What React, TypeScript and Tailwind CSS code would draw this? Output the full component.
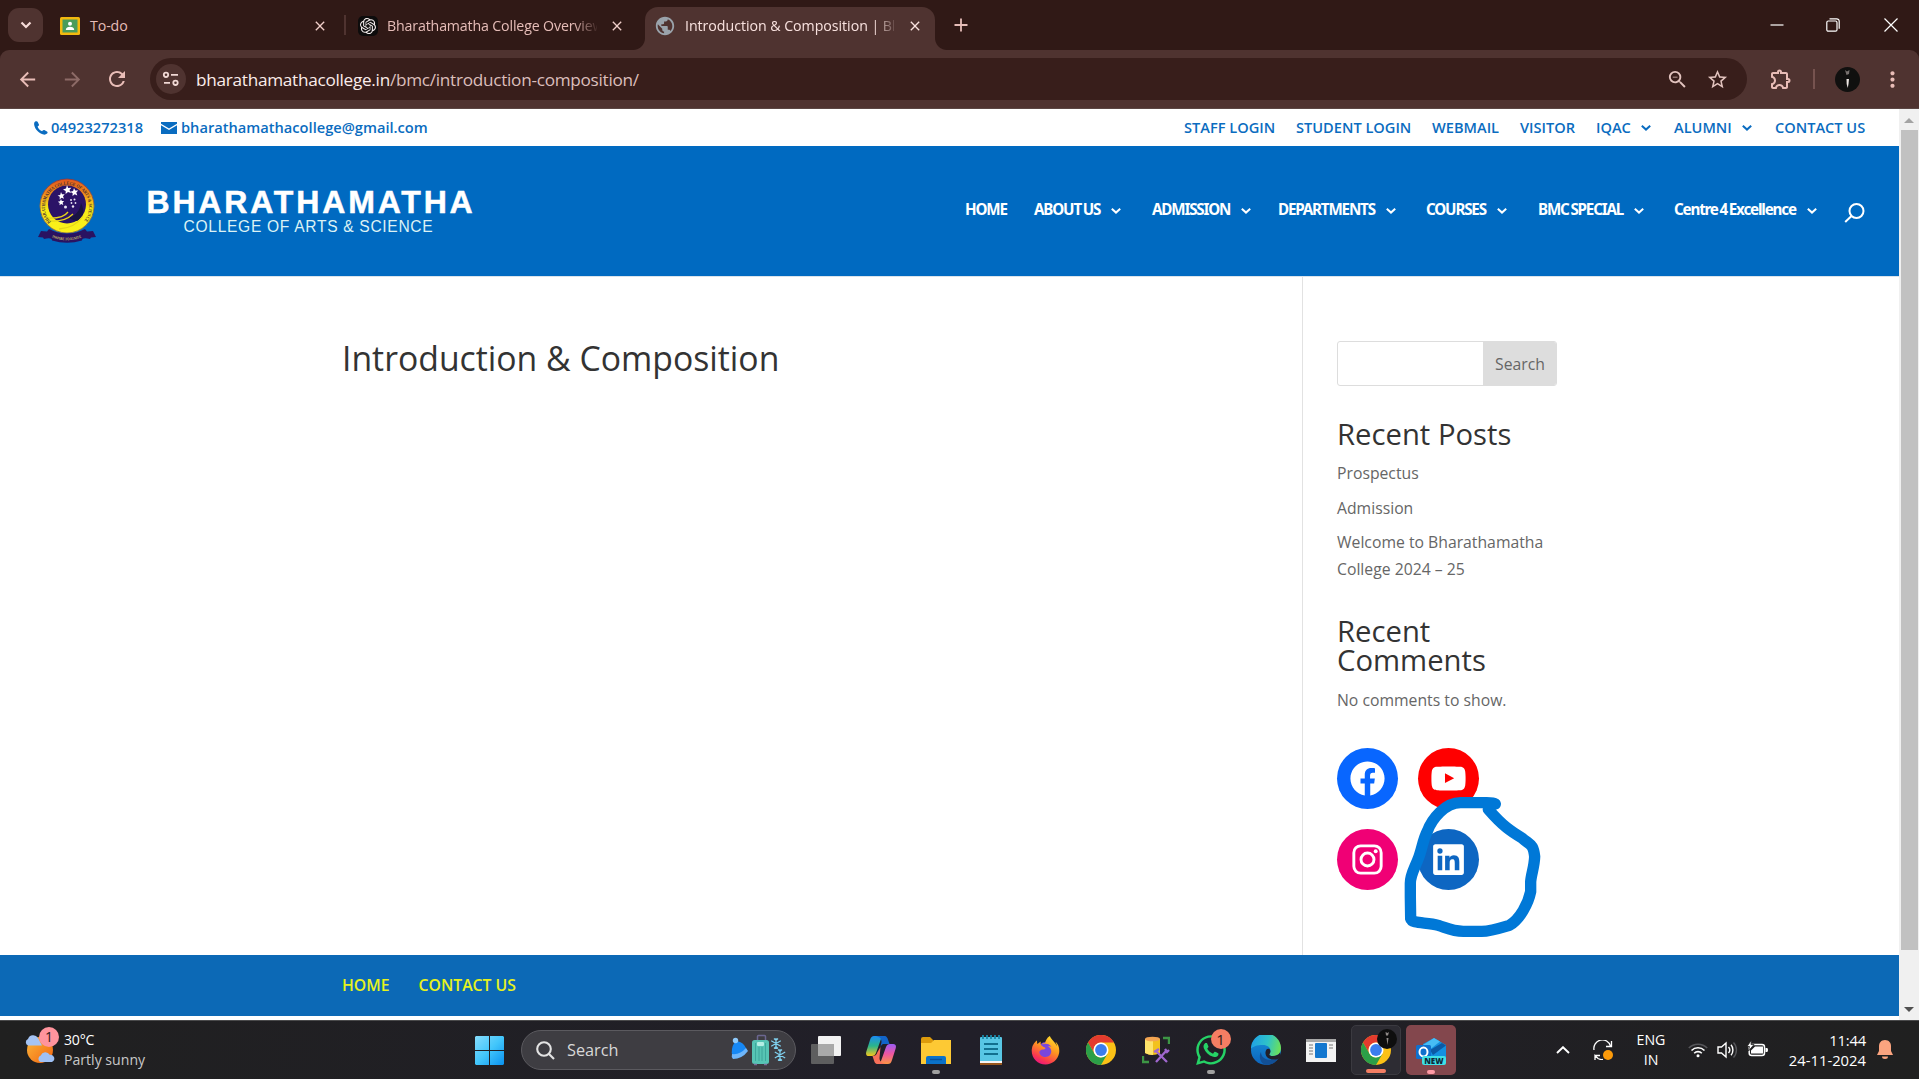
import type { ReactNode } from 'react';
import { MdArrowBack, MdArrowForward, MdClose, MdMoreVert, MdOutlineExtension, MdPublic, MdRefresh, MdStarBorder, MdZoomOut } from 'react-icons/md';
import { SiOpenai } from 'react-icons/si';
import { FaWhatsapp, FaFirefoxBrowser } from 'react-icons/fa';

const topLinks = [
  { label: 'STAFF LOGIN', width: 'w-[112px]' },
  { label: 'STUDENT LOGIN', width: 'w-[136px]' },
  { label: 'WEBMAIL', width: 'w-[88px]' },
  { label: 'VISITOR', width: 'w-[76px]' },
  { label: 'IQAC', width: 'w-[78px]', menu: true },
  { label: 'ALUMNI', width: 'w-[101px]', menu: true },
  { label: 'CONTACT US', width: 'w-[90px]' },
];

const mainLinks = [
  { label: 'HOME', width: 'w-[69px]' },
  { label: 'ABOUT US', width: 'w-[118px]', menu: true },
  { label: 'ADMISSION', width: 'w-[126px]', menu: true },
  { label: 'DEPARTMENTS', width: 'w-[148px]', menu: true },
  { label: 'COURSES', width: 'w-[112px]', menu: true },
  { label: 'BMC SPECIAL', width: 'w-[136px]', menu: true },
  { label: 'Centre 4 Excellence', width: 'w-[170px]', menu: true },
];

function Caret({ className }: { className: string }) {
  return (
    <svg viewBox="0 0 10 6" className={className} fill="none" stroke="currentColor" strokeWidth="2">
      <path d="M.8.8 5 4.600 9.200.8" />
    </svg>
  );
}

function TabStrip() {
  return (
    <div className="flex h-[50px] bg-[#301916] text-[14.200px] text-[#e6bdb8]">
      <div className="ml-2 mt-2 flex h-[34px] w-[35px] items-center justify-center rounded-[11px] bg-[#4f3330] text-[#f7dcd8]">
        <svg viewBox="0 0 12 8" className="h-2 w-3" fill="none" stroke="currentColor" strokeWidth="2.200"><path d="m1.500 1.500 4.500 4.500 4.500-4.500" /></svg>
      </div>
      <div className="ml-[17px] flex h-[51px] w-[284px] items-center">
        <svg viewBox="0 0 20 18" className="h-[18px] w-5">
          <rect width="20" height="18" rx="1.500" fill="#f2b90f" />
          <rect x="2.500" y="2.500" width="15" height="13" fill="#4a9c5b" />
          <circle cx="10" cy="6.800" r="2" fill="#fff" />
          <path d="M5.800 13c0-2.300 2-3.200 4.200-3.200s4.200.9 4.200 3.200z" fill="#fff" />
        </svg>
        <span className="ml-[10px] w-[222px] tracking-[-0.100px]">To-do</span>
        <MdClose className="text-[16px] text-[#f0cfca]" />
      </div>
      <div className="mt-[15px] h-5 w-[2px] bg-[#4f3330]" />
      <div className="ml-3 flex h-[51px] w-[287px] items-center">
        <span className="flex size-5 items-center justify-center rounded-[5px] bg-[#0d0c0c] text-[#f5eeee]"><SiOpenai className="size-4" /></span>
        <span className="ml-[9px] w-[210px] overflow-hidden whitespace-nowrap tracking-[-0.150px] [mask-image:linear-gradient(to_right,black_186px,transparent_212px)]">Bharathamatha College Overview</span>
        <MdClose className="ml-[12px] text-[16px] text-[#f0cfca]" />
      </div>
      <div className="relative mt-[7px] flex h-[43px] w-[290px] items-center rounded-t-[13px] bg-[#4f3330] pb-[6px] text-[#f9e2df]">
        <span className="absolute -left-3 bottom-0 size-3 bg-[radial-gradient(circle_at_0_0,#301916_11.500px,#4f3330_12.500px)]" />
        <span className="absolute -right-3 bottom-0 size-3 bg-[radial-gradient(circle_at_100%_0,#301916_11.500px,#4f3330_12.500px)]" />
        <MdPublic className="ml-[9px] size-[22px] text-[#9aa3ab]" />
        <span className="ml-[9px] w-[209px] overflow-hidden whitespace-nowrap tracking-[-0.040px] [mask-image:linear-gradient(to_right,black_188px,transparent_214px)]">Introduction &amp; Composition | Bharathamatha</span>
        <MdClose className="ml-[13px] text-[16px]" />
      </div>
      <svg viewBox="0 0 14 14" className="ml-[19px] mt-[18px] size-[14px]" stroke="#e6bdb8" strokeWidth="1.800"><path d="M7 .5v13M.5 7h13" /></svg>
      <div className="ml-auto mr-[21px] flex h-[49px] items-center text-white">
        <svg viewBox="0 0 14 14" className="mr-[42px] size-[14px]" stroke="currentColor" strokeWidth="1.200"><path d="M.5 7h13" /></svg>
        <svg viewBox="0 0 14 14" className="mr-[44px] size-[14px]" fill="none" stroke="currentColor" strokeWidth="1.200">
          <rect x=".8" y="3" width="10.200" height="10.200" rx="1.500" />
          <path d="M3.500.8h7.200a2.500 2.500 0 0 1 2.500 2.500v7.500" />
        </svg>
        <svg viewBox="0 0 14 14" className="size-[14px]" stroke="currentColor" strokeWidth="1.200"><path d="m.5.5 13 13M13.500.5l-13 13" /></svg>
      </div>
    </div>
  );
}

function Toolbar() {
  return (
    <div className="bg-[#301916]">
      <div className="flex h-[59px] items-center rounded-t-[9px] border-b border-[#5b4643] bg-[#4f3330] text-[#e9bdb7]">
        <MdArrowBack className="ml-4 size-[23px]" />
        <MdArrowForward className="ml-[22px] size-[23px] text-[#8d6b67]" />
        <MdRefresh className="ml-[21px] size-[24px]" />
        <div className="ml-[21px] flex h-[42px] w-[1597px] items-center rounded-full bg-[#381e1b]">
          <span className="ml-[6px] flex size-[30px] items-center justify-center rounded-full bg-[#4f3330]">
            <svg viewBox="0 0 18 16" className="h-4 w-[18px]" fill="none" stroke="#f0d8d4" strokeWidth="1.800">
              <circle cx="4" cy="3.800" r="2.200" /><path d="M9 3.800h7M2 11.800h6" /><circle cx="13.500" cy="11.800" r="2.200" />
            </svg>
          </span>
          <span className="ml-[10px] whitespace-nowrap pt-px text-[17.200px] tracking-[-0.280px] text-[#dcbfbb]"><span className="text-[#fbecea]">bharathamathacollege.in</span>/bmc/introduction-composition/</span>
          <MdZoomOut className="ml-auto size-[23px] text-[#e2c3be]" />
          <MdStarBorder className="ml-[17px] mr-[18px] size-[23px] text-[#e2c3be]" />
        </div>
        <MdOutlineExtension className="ml-[22px] size-[24px]" />
        <span className="ml-[20px] h-5 w-[2px] bg-[#76534f]" />
        <svg viewBox="0 0 25 25" className="ml-[20px] size-[25px]">
          <circle cx="12.500" cy="12.500" r="12.500" fill="#10100f" />
          <path d="m10 3 2 1.500L14.500 3l-.5 4-2.500 1z" fill="#77716f" /><path d="m11.500 12 2.500 0-.5 5-.8 4-1-4z" fill="#ece6e3" />
        </svg>
        <MdMoreVert className="ml-[20px] size-[25px]" />
      </div>
    </div>
  );
}

function Crest() {
  return (
    <svg viewBox="0 0 60 66" className="h-[66px] w-[60px]">
      <defs>
        <linearGradient id="ring" x1="0" y1="0" x2="0" y2="1"><stop offset="0" stopColor="#e2571c" /><stop offset=".28" stopColor="#f08d1b" /><stop offset=".55" stopColor="#f8ec16" /><stop offset="1" stopColor="#fbf21a" /></linearGradient>
        <path id="crestArc" d="M14 44A22 22 0 1 1 46 44" />
        <path id="ribbonArc" d="M15 59.500q15 5.500 30 0" />
      </defs>
      <circle cx="30" cy="28" r="27.300" fill="url(#ring)" />
      <circle cx="30" cy="28" r="27" fill="none" stroke="#5b2c5e" strokeWidth=".6" />
      <circle cx="30" cy="26.500" r="19" fill="#2b1367" />
      <path d="M30 40q12-2 14-15 6 12-4 18z" fill="#191341" />
      <path d="m30 7 1.200 3 3.200-.3-2 2.400 1.600 2.900-3-1-2.400 2.100.1-3.200-2.700-1.500 3-.9zM37 10l1.200 2.600 3-.1-1.900 2.100 1 2.800-2.600-1.200-2.200 1.900.2-2.900-2.500-1.500 2.900-.7zM24 14l1 2.300 2.700-.1-1.700 2 1 2.500-2.400-1-2 1.700.2-2.600-2.200-1.300 2.600-.6zM24 21l.8 2 2.300 0-1.500 1.700.7 2.200-2.100-1-1.700 1.400.2-2.300-1.900-1.200 2.200-.5z" fill="#fff" />
      <g fill="#e8e4f2"><circle cx="34" cy="22" r="1" /><circle cx="37.500" cy="21.500" r="1" /><circle cx="34.500" cy="25" r=".9" /><circle cx="38.500" cy="25" r=".9" /><circle cx="28.500" cy="29" r="1.500" /><circle cx="36" cy="28.500" r="1.200" /></g>
      <path d="M10 40Q26 41 31 34M13 43Q28 44 36 36M22 51Q38 50 46 38" stroke="#e6d51a" strokeWidth="1.300" fill="none" />
      <text fontSize="4.800" fontWeight="700" fill="#4a2a30" className="font-['Liberation_Serif',serif]"><textPath href="#crestArc" textLength="100" lengthAdjust="spacingAndGlyphs">BHARATHAMATHA COLLEGE OF ARTS &amp; SCIENCE</textPath></text>
      <path d="M1 59l3-6 6 .5 2-2.500q18 9 36 0l2 2.500 6-.5 3 6-5 .5-1 1.500q-8-2-8 1.500-15 4.500-30 0 0-3.500-8-1.500l-1-1.500z" fill="#2a1261" />
      <text fontSize="4" fontWeight="700" fill="#d9ca6a" className="font-['Liberation_Serif',serif]"><textPath href="#ribbonArc" textLength="30" lengthAdjust="spacingAndGlyphs">INSPIRE TO IGNITE</textPath></text>
    </svg>
  );
}

function SiteHeader() {
  return (
    <header>
      <div className="flex h-[37px] items-center bg-white pl-[34px] pr-[34px] text-[14.650px] font-semibold text-[#0a6cc0]">
        <svg viewBox="0 0 14 14" className="mt-px size-[14px]" fill="currentColor"><path d="M1.200.6C2.500-.2 3.400.2 4 1.500l.9 2c.3.700 0 1.200-.6 1.600l-.7.5c.5 2 2.600 4.100 4.500 4.700l.6-.7c.4-.5 1-.8 1.600-.5l2.200 1.100c1.100.6 1.500 1.400.6 2.300-.9.900-2.200 1.300-3.500 1.100C5.200 12.700.9 8.300.2 4 0 2.600.2 1.300 1.200.6z" /></svg>
        <span className="ml-[3px] w-[110px]">04923272318</span>
        <svg viewBox="0 0 16 12" className="h-3 w-4" fill="currentColor"><path d="M0 0h16v1.800L8 6.500 0 1.800zM0 3.200l8 4.700 8-4.700V12H0z" /></svg>
        <span className="ml-[4px]">bharathamathacollege@gmail.com</span>
        <nav className="ml-auto flex whitespace-nowrap text-[14.600px]">
          {topLinks.map((l) => (
            <a key={l.label} className={`${l.width} flex items-center`}>
              {l.label}
              {l.menu && <Caret className="ml-[10px] mt-[2px] h-[6px] w-[10px]" />}
            </a>
          ))}
        </nav>
      </div>
      <div className="flex h-[130px] items-center bg-[#006ac1] pl-[37px] pr-[34px] text-white">
        <Crest />
        <div className="ml-[50px] flex w-[326px] flex-col items-center whitespace-nowrap font-['Liberation_Sans',sans-serif]">
          <span className="-mr-[2px] text-[32px] font-bold leading-[30px] tracking-[2.850px] [-webkit-text-stroke:0.500px_white]">BHARATHAMATHA</span>
          <span className="mr-[3px] mt-px text-[15.600px] leading-[18px] tracking-[0.680px] text-[#dcf2f5]">COLLEGE OF ARTS &amp; SCIENCE</span>
        </div>
        <nav className="ml-auto flex whitespace-nowrap pb-[3px] font-['Noto_Sans',sans-serif] text-[15.200px] font-bold tracking-[-1.180px] [word-spacing:-1px]">
          {mainLinks.map((l) => (
            <a key={l.label} className={`${l.width} flex items-center`}>
              {l.label}
              {l.menu && <Caret className="ml-[11px] mt-[3px] h-[6px] w-[10px]" />}
            </a>
          ))}
        </nav>
        <svg viewBox="0 0 21 20" className="mt-[3px] h-5 w-[21px]" fill="none" stroke="currentColor" strokeWidth="2"><circle cx="12.500" cy="8" r="7" /><path d="m7.500 13-6.300 6" /></svg>
      </div>
    </header>
  );
}

function Social({ color, children }: { color: string; children: ReactNode }) {
  return (
    <a className={`${color} flex size-[61px] items-center justify-center rounded-full`}>
      <svg viewBox="0 0 24 24" className="size-[41px]" fill="#fff">{children}</svg>
    </a>
  );
}

function Sidebar() {
  return (
    <aside className="w-[256px] border-l border-[#e2e2e2] pl-[34px] pt-[64px] text-[15.750px] leading-[27px] text-[#666]">
      <div className="flex h-[45px] w-[220px] overflow-hidden rounded-[3px] border border-[#ddd] bg-white">
        <input className="w-[145px] outline-none" aria-label="Search" />
        <button className="w-[74px] bg-[#ddd] pl-px pt-px">Search</button>
      </div>
      <h2 className="mt-[34px] text-[29.250px] leading-[29px] text-[#333]">Recent Posts</h2>
      <ul className="mt-[11px] w-[220px] text-[15.750px]">
        <li>Prospectus</li>
        <li className="mt-2">Admission</li>
        <li className="mt-[7px]">Welcome to Bharathamatha College 2024 – 25</li>
      </ul>
      <h2 className="mt-[34px] w-[200px] text-[29.250px] leading-[29px] text-[#333]">Recent Comments</h2>
      <p className="mt-[12px]">No comments to show.</p>
      <div className="relative mt-[34px] grid w-[142px] grid-cols-2 gap-5">
        <Social color="bg-[#0866ff]"><path d="M12 2C6.500 2 2 6.500 2 12c0 5 3.700 9.100 8.400 9.900v-7H7.900V12h2.500V9.800c0-2.500 1.500-3.900 3.800-3.900 1.100 0 2.200.2 2.200.2v2.500h-1.300c-1.200 0-1.600.8-1.600 1.600V12h2.800l-.4 2.900h-2.300v7C18.300 21.100 22 17 22 12c0-5.500-4.500-10-10-10z" /></Social>
        <Social color="bg-[#f00]"><path d="M21.800 8.001s-.195-1.378-.795-1.985c-.76-.797-1.613-.801-2.004-.847-2.799-.202-6.997-.202-6.997-.202h-.009s-4.198 0-6.997.202c-.39.047-1.242.051-2.003.847C2.395 6.623 2.200 8.001 2.200 8.001S2 9.620 2 11.238v1.517c0 1.618.2 3.237.2 3.237s.195 1.378.795 1.985c.761.797 1.760.771 2.205.855 1.600.153 6.800.201 6.800.201s4.203-.006 7.001-.209c.391-.047 1.243-.051 2.004-.847.6-.607.795-1.985.795-1.985s.2-1.618.2-3.237v-1.517C22 9.620 21.800 8.001 21.800 8.001zM9.935 14.594l-.001-5.620 5.404 2.820z" /></Social>
        <Social color="bg-[#f00075]">
          <rect x="4" y="4" width="16" height="16" rx="4" fill="none" stroke="#fff" strokeWidth="1.700" />
          <circle cx="12" cy="12" r="3.800" fill="none" stroke="#fff" strokeWidth="1.700" /><circle cx="16.800" cy="7.200" r="1.150" />
        </Social>
        <Social color="bg-[#0d66c2]"><path d="M19.700 3H4.300C3.582 3 3 3.582 3 4.300v15.400c0 .718.582 1.300 1.300 1.300h15.400c.718 0 1.300-.582 1.300-1.300V4.300c0-.718-.582-1.300-1.300-1.300zM8.339 18.338H5.667v-8.590h2.672zM7.004 8.574a1.548 1.548 0 1 1 0-3.096 1.548 1.548 0 0 1 0 3.096zM18.339 18.338H15.670v-4.177c0-.996-.017-2.278-1.387-2.278-1.389 0-1.601 1.086-1.601 2.206v4.249h-2.667v-8.590h2.559v1.174h.037c.356-.675 1.227-1.387 2.526-1.387 2.703 0 3.203 1.779 3.203 4.092z" /></Social>
        <svg viewBox="0 0 900 720" className="absolute -left-[47px] -top-[28px] h-[240px] w-[300px] max-w-none" fill="none" stroke="#0078d7" strokeWidth="34" strokeLinecap="round" strokeLinejoin="round">
          <path d="M616 252Q610 248 590 248H515C465 246 425 298 412 334C400 356 396 385 387 410C374 446 361 462 361 490V530L362 596C366 612 410 606 445 616C475 626 488 634 520 634H575C600 634 625 626 658 616C690 598 715 550 722 515V485C724 462 733 440 734 410C730 372 722 376 696 354C665 335 640 320 595 268" />
        </svg>
      </div>
    </aside>
  );
}

function Scrollbar() {
  return (
    <div className="flex w-5 flex-col items-center bg-[#f0f0f0]">
      <span className="mt-[9px] border-x-[5px] border-b-[5px] border-x-transparent border-b-[#a3a3a3]" />
      <span className="mt-[7px] h-[820px] w-[17px] bg-[#c1c1c1]" />
      <span className="mb-[8px] mt-auto border-x-[5px] border-t-[5px] border-x-transparent border-t-[#505050]" />
    </div>
  );
}

function ChromeLogo() {
  return (
    <svg viewBox="0 0 30 30" className="size-[30px]">
      <circle cx="15" cy="15" r="15" fill="#fbc116" />
      <path d="M2 7.500A15 15 0 0 1 28 7.500H15a7.500 7.500 0 0 0-6.500 11.200z" fill="#e33b2e" />
      <path d="M2 7.500 8.500 18.700A7.500 7.500 0 0 0 15 22.500l6.500-3.800L15 30A15 15 0 0 1 2 7.500z" fill="#2b9f48" />
      <circle cx="15" cy="15" r="7.500" fill="#fff" /><circle cx="15" cy="15" r="5.900" fill="#3b7ded" />
    </svg>
  );
}

function TaskSlot({ bar, tile = '', children }: { bar?: string; tile?: string; children: ReactNode }) {
  return (
    <div className="flex w-[55px] justify-center">
      <div className={`${tile} relative mt-[4px] flex h-[50px] w-[50px] items-center justify-center rounded-[5px]`}>
        {children}
        {bar && <span className={`${bar} absolute bottom-[1px] h-[4px] rounded-full`} />}
      </div>
    </div>
  );
}

function SearchHighlights() {
  return (
    <svg viewBox="0 0 56 32" className="h-8 w-14">
      <path d="M2 15q2-10 8-7 5 2 7 9L3 22q-2-3-1-7z" fill="#1688f5" />
      <path d="M2 20q8 1 14-6l2 3q-6 8-15 8-2-2-1-5z" fill="#6eb6fb" /><circle cx="5.500" cy="6.500" r="2.700" fill="#8ec9fa" />
      <path d="M27.500 7V2.500q0-1 1-1h6q1 0 1 1V7" fill="none" stroke="#6b6790" strokeWidth="1.500" />
      <rect x="22" y="6" width="17" height="24" rx="2.500" fill="#56c4b4" /><path d="M25.500 9v18M29 13v14M32 13v14M35.500 9v18" stroke="#37a094" strokeWidth=".8" />
      <rect x="27" y="8" width="7" height="4" rx="1" fill="#b5eee4" /><path d="M24 30.500h3m7 0h3" stroke="#7b6c9a" strokeWidth="1.500" />
      <g stroke="#7fd0ee" strokeWidth="1.200" fill="none"><path d="M46 4v11M41.200 6.800l9.600 5.500M41.200 12.200l9.600-5.500M44 4.500 46 6.500l2-2M44 14.500l2-2 2 2" /><path d="M50 15v12M44.800 18l10.400 6M44.800 24l10.400-6M48 15.500l2 2 2-2M48 26.500l2-2 2 2" /></g>
    </svg>
  );
}

function Taskbar() {
  return (
    <footer className="flex h-[59px] border-t border-[#4a4a4b] bg-linear-to-r from-[#202020] via-[#211f29] to-[#202020] text-white">
      <div className="flex w-[464px] pl-[25px]">
        <div className="relative mt-[13px] h-[34px] w-[31px]">
          <svg viewBox="0 0 31 34" className="h-[34px] w-[31px]">
            <defs><linearGradient id="sun" x1="0" y1="0" x2="1" y2="1"><stop stopColor="#fbb93a" /><stop offset="1" stopColor="#f26310" /></linearGradient></defs>
            <circle cx="15" cy="16" r="13" fill="url(#sun)" />
            <path d="M3 11.500a3.500 3.500 0 0 1 0-6.500 5.500 5.500 0 0 1 10-1l4 7.500z" fill="#a5c4f4" />
            <path d="M15.500 28a3.500 3.500 0 0 1 .2-6.500 5 5 0 0 1 9-.7 3.800 3.800 0 0 1 2.300 7.200z" fill="#9fc1f5" />
          </svg>
          <span className="absolute -top-[7px] left-[14px] flex size-5 items-center justify-center rounded-full bg-[#ff949d] text-[14px] leading-5 text-[#30191b]">1</span>
        </div>
        <div className="ml-[8px] mt-[9px] text-[14.100px] leading-5">
          <div className="tracking-[-0.200px]">30°C</div>
          <div className="text-[#c8c8c8]">Partly sunny</div>
        </div>
      </div>
      <div className="flex w-[50px] items-center justify-center">
        <svg viewBox="0 0 29 29" className="size-[29px]">
          <defs><linearGradient id="win" x1="0" y1="0" x2="1" y2="1"><stop stopColor="#86dcfb" /><stop offset=".5" stopColor="#42c6fb" /><stop offset="1" stopColor="#0a91ef" /></linearGradient></defs>
          <path fill="url(#win)" d="M1 0h13v14H0V1zM15 0h13l1 1v13H15zM0 15h14v14H1l-1-1zM15 15h14v13l-1 1H15z" />
        </svg>
      </div>
      <div className="ml-[7px] mt-[9px] flex h-[40px] w-[275px] items-center rounded-full border border-[#5b5a5f] bg-[#3e3d42]">
        <svg viewBox="0 0 19 19" className="ml-[14px] size-[19px]" fill="none" stroke="#e3e3e3" strokeWidth="2.100"><circle cx="8" cy="8" r="6.800" /><path d="m13 13 5 5" /></svg>
        <span className="ml-[12px] pt-px text-[16.300px] text-[#d8d8d8]">Search</span>
        <span className="ml-auto mr-[9px]"><SearchHighlights /></span>
      </div>
      <div className="ml-[2px] flex">
        <TaskSlot>
          <svg viewBox="0 0 30 28" className="h-7 w-[30px]"><rect x="7" width="23" height="20" rx="1" fill="#f2f2f2" /><rect y="8" width="23" height="20" rx="1" fill="#5e5e5f" /><path d="M7 8h16v12H7z" fill="#a9a9a9" /></svg>
        </TaskSlot>
        <TaskSlot>
          <svg viewBox="0 0 30 28" className="h-7 w-[30px]">
            <defs>
              <linearGradient id="cp1" x1="0" y1="0" x2="0" y2="1"><stop stopColor="#1b8cf3" /><stop offset=".5" stopColor="#2bb58a" /><stop offset="1" stopColor="#f5c81c" /></linearGradient>
              <linearGradient id="cp2" x1="0" y1="0" x2="0" y2="1"><stop stopColor="#9b5cf5" /><stop offset=".5" stopColor="#f0569f" /><stop offset="1" stopColor="#fb9642" /></linearGradient>
            </defs>
            <path d="M8 0h10l-3 3-5 14c-.8 2-2 3-4 3H3c-3 0-3.500-2-2.500-5L4 4c1-3 2-4 4-4z" fill="url(#cp1)" />
            <path d="M10 0h8c3 0 3.500 2 4.500 5l1 3h-5c-2 0-3 .5-4 3l1-5c0-3-1-5-5.500-6z" fill="#1264c9" />
            <path d="M22 28H12l3-3 5-14c.8-2 2-3 4-3h3c3 0 3.500 2 2.500 5L26 24c-1 3-2 4-4 4z" fill="url(#cp2)" />
            <path d="M20 28h-8c-3 0-3.500-2-4.500-5l-1-3c2.500 0 4-1 5-4l3-5-1 11c0 3 1.500 5 6.500 6z" fill="#f7705a" />
          </svg>
        </TaskSlot>
        <TaskSlot bar="w-[8px] bg-[#a0a0a0]">
          <svg viewBox="0 0 30 27" className="h-[27px] w-[30px]"><path d="M0 2q0-2 2-2h7l4 4h15q2 0 2 2v6H0z" fill="#dd9b0c" /><path d="M0 6h10l3-3h17v24H0z" fill="#fdc934" /><path d="M5 27v-6q0-2 2-2h16q2 0 2 2v6z" fill="#0b72c9" /><path d="M9 22.500h12" stroke="#07509b" strokeWidth="1.400" /></svg>
        </TaskSlot>
        <TaskSlot>
          <svg viewBox="0 0 22 30" className="h-[30px] w-[22px]"><rect y="2" width="22" height="25" rx="1" fill="#58c6e4" /><path d="M0 26h22v3q0 1-1 1H1q-1 0-1-1z" fill="#f4f4f4" /><path d="M0 28h22v2H0z" fill="#97561c" /><path d="M3 0v4M7 0v4M11 0v4M15 0v4M19 0v4" stroke="#1a88a8" strokeWidth="1.800" /><path d="M4 9h14M4 14h14M4 19h14" stroke="#12708f" strokeWidth="1.800" /></svg>
        </TaskSlot>
        <TaskSlot>
          <svg width="0" height="0" className="absolute"><defs><linearGradient id="fox" x1=".8" y1="0" x2=".3" y2="1"><stop stopColor="#ffe32e" /><stop offset=".45" stopColor="#ff9420" /><stop offset=".8" stopColor="#fb3a4e" /><stop offset="1" stopColor="#ec1380" /></linearGradient></defs></svg>
          <span className="absolute size-[16px] rounded-full bg-[#7a46dd]" />
          <FaFirefoxBrowser className="relative size-[29px]" fill="url(#fox)" />
        </TaskSlot>
        <TaskSlot><ChromeLogo /></TaskSlot>
        <TaskSlot>
          <svg viewBox="0 0 28 28" className="size-7"><path d="M3 3v14q7 4 15 0V3z" fill="#f3c21d" /><path d="M3 3v14q4 2 8 2V3z" fill="#fde36a" /><ellipse cx="10.500" cy="3" rx="7.500" ry="2.300" fill="#f3a552" /><path d="M21 2h6v6M1 20v6h6" fill="none" stroke="#3d9645" strokeWidth="2.400" /><path d="m14 26 11-12M14 15l11 11M12 16l5-3M23 13l2 3 2-2" stroke="#a067cf" strokeWidth="2.300" fill="none" /></svg>
        </TaskSlot>
        <TaskSlot bar="w-[8px] bg-[#a0a0a0]">
          <FaWhatsapp className="size-[34px] text-[#25d366]" />
          <span className="absolute left-[25px] top-[4px] flex size-5 items-center justify-center rounded-full bg-[#f47e63] text-[15px] leading-5 text-[#2d1712]">1</span>
        </TaskSlot>
        <TaskSlot>
          <svg viewBox="0 0 30 30" className="size-[30px]">
            <defs>
              <linearGradient id="ed1" x1="0" y1=".3" x2="1" y2=".5"><stop stopColor="#1fa0e8" /><stop offset=".55" stopColor="#2fc3c8" /><stop offset="1" stopColor="#6be05a" /></linearGradient>
              <linearGradient id="ed2" x1="0" y1="0" x2="0" y2="1"><stop stopColor="#1794dc" /><stop offset="1" stopColor="#0d63bb" /></linearGradient>
            </defs>
            <circle cx="15" cy="15" r="15" fill="url(#ed2)" />
            <path d="M10 17c0 6 6 10 17 6.500Q23 30 15 30C8 28 8 20 10 17z" fill="#124f95" />
            <path d="M0 14A15 15 0 0 1 30 13c0 6-4 8-8 8-3 0-4-1-3.500-2 3-5-1-9-6.500-9C6 10 1.500 11.500 0 14z" fill="url(#ed1)" />
            <path d="M18.500 19c-.5 1 .5 2 3.500 2 3 0 6-1.300 7-3.500L30 21l-3 3c-9 2-13-2-12.500-7 .5-3 2-4 4-3 1.500 2 1 3.500 0 5z" fill="#22202a" />
          </svg>
        </TaskSlot>
        <TaskSlot>
          <svg viewBox="0 0 30 23" className="h-[23px] w-[30px]"><rect width="30" height="23" fill="#f3f3f3" /><path d="M0 0h30v3H0z" fill="#a8a8a8" /><rect x="9" y="4" width="12" height="15" rx="1" fill="#1377cf" /><path d="M3 6h4M3 9h4M3 12h4M3 15h4M23 6h4M23 9h4" stroke="#777" /></svg>
        </TaskSlot>
        <TaskSlot tile="border border-[#3b3a40] bg-[#2d2c33]" bar="w-[20px] bg-[#f47e63]">
          <ChromeLogo />
          <svg viewBox="0 0 20 20" className="absolute left-[25px] top-[3px] size-5"><circle cx="10" cy="10" r="10" fill="#0e0e0e" /><path d="m8.500 3 2 1 1.500-1-1 3.500h-2zM9.500 9h2l-1 7z" fill="#8f8a88" /></svg>
        </TaskSlot>
        <TaskSlot tile="bg-[#83474d]" bar="w-[8px] bg-[#ff9aa5]">
          <svg viewBox="0 0 30 28" className="mt-[3px] h-7 w-[30px]"><path d="M7 6 18 0l12 7v16q0 3-3 3H10q-3 0-3-3z" fill="#1490df" /><path d="m7 7 11-7 6 3.500L12 13z" fill="#47bdf5" /><path d="m14 12 12-7 4 2.500L17 17z" fill="#0c59a4" /><rect y="7" width="15" height="14" rx="1.500" fill="#0f70cd" /><ellipse cx="7.500" cy="14" rx="4" ry="4.400" fill="none" stroke="#fff" strokeWidth="2" /></svg>
          <span className="absolute bottom-[10px] right-[10px] rounded-[2px] bg-[#3fe0e6] px-[2px] text-[8px] font-extrabold leading-[9px] text-[#0d2a3a]">NEW</span>
        </TaskSlot>
      </div>
      <div className="ml-auto flex items-center pb-px text-[14.600px] leading-5">
        <svg viewBox="0 0 14 8" className="mr-[23px] h-2 w-[14px]" fill="none" stroke="#fff" strokeWidth="1.900"><path d="m1 7 6-5.800L13 7" /></svg>
        <svg viewBox="0 0 20 20" className="mr-[23px] size-5" fill="none" stroke="#fff" strokeWidth="1.300"><path d="M1 10a8.500 8.500 0 0 1 16.500-4M18.500 1v5.500H13M2 15.500h5M2 20v-4.500l3 3q3 1.500 5 1" /><circle cx="15" cy="15" r="5" fill="#fb9a0a" stroke="none" /></svg>
        <div className="mr-[22px] w-[30px] whitespace-nowrap pt-px text-center text-[14.200px]"><div>ENG</div><div>IN</div></div>
        <svg viewBox="0 0 20 16" className="mr-[9px] h-4 w-5" fill="none" stroke="#fff" strokeWidth="1.600"><path d="M.8 6a13 13 0 0 1 18.400 0" stroke="#56565a" /><path d="M3.500 8.500a9.200 9.200 0 0 1 13 0M6.200 11.200a5.400 5.400 0 0 1 7.600 0" /><circle cx="10" cy="13.800" r="1.500" fill="#fff" stroke="none" /></svg>
        <svg viewBox="0 0 21 18" className="mr-[9px] h-[18px] w-[21px]" fill="none" stroke="#fff" strokeWidth="1.400"><path d="M1 6h3.500L9 2v14l-4.500-4H1z" /><path d="M11.500 6a4.500 4.500 0 0 1 0 6M14 3.800a8 8 0 0 1 0 10.400" /><path d="M16.500 1.500a11 11 0 0 1 0 15" stroke="#56565a" /></svg>
        <svg viewBox="0 0 21 17" className="mr-[19px] mb-[3px] h-[17px] w-[21px]"><rect x="2.200" y="4.500" width="15.300" height="11" rx="2.500" fill="none" stroke="#fff" strokeWidth="1.500" /><path d="M8 6.500h8v7H4v-3zM18.500 8h1.500q1 0 1 2t-1 2h-1.500z" fill="#fff" /><path d="M4.500 0 0 6.500h2.500L1.500 11 7 4.500H4z" fill="#fff" stroke="#202020" strokeWidth=".8" /></svg>
        <div className="mr-[11px] w-[79px] whitespace-nowrap text-right text-[14.800px]"><div className="tracking-[-0.200px]">11:44</div><div>24-11-2024</div></div>
        <svg viewBox="0 0 16 19" className="mr-[26px] h-[19px] w-4" fill="#fba47f"><path d="M8 0C4 0 2 3 2 6v5l-2 4h16l-2-4V6c0-3-2-6-6-6zM5 16.500h6a3 2.500 0 0 1-6 0z" /></svg>
      </div>
    </footer>
  );
}

export default function App() {
  return (
    <div className="flex h-[1079px] w-[1919px] flex-col overflow-hidden bg-white font-['Open_Sans',sans-serif]">
      <TabStrip />
      <Toolbar />
      <div className="flex h-[911px]">
        <div className="flex flex-1 flex-col">
          <SiteHeader />
          <main className="flex h-[679px] justify-between border-t border-[#d9e3ec] pl-[342px] pr-[341px]">
            <h1 className="mt-[64px] text-[33.750px] leading-[34px] text-[#333]">Introduction &amp; Composition</h1>
            <Sidebar />
          </main>
          <div className="flex h-[61px] items-center gap-[29px] bg-[#0c69b6] pl-[342px] text-[15.750px] font-semibold text-[#e6f21d]">
            <a>HOME</a>
            <a>CONTACT US</a>
          </div>
        </div>
        <Scrollbar />
      </div>
      <Taskbar />
    </div>
  );
}
